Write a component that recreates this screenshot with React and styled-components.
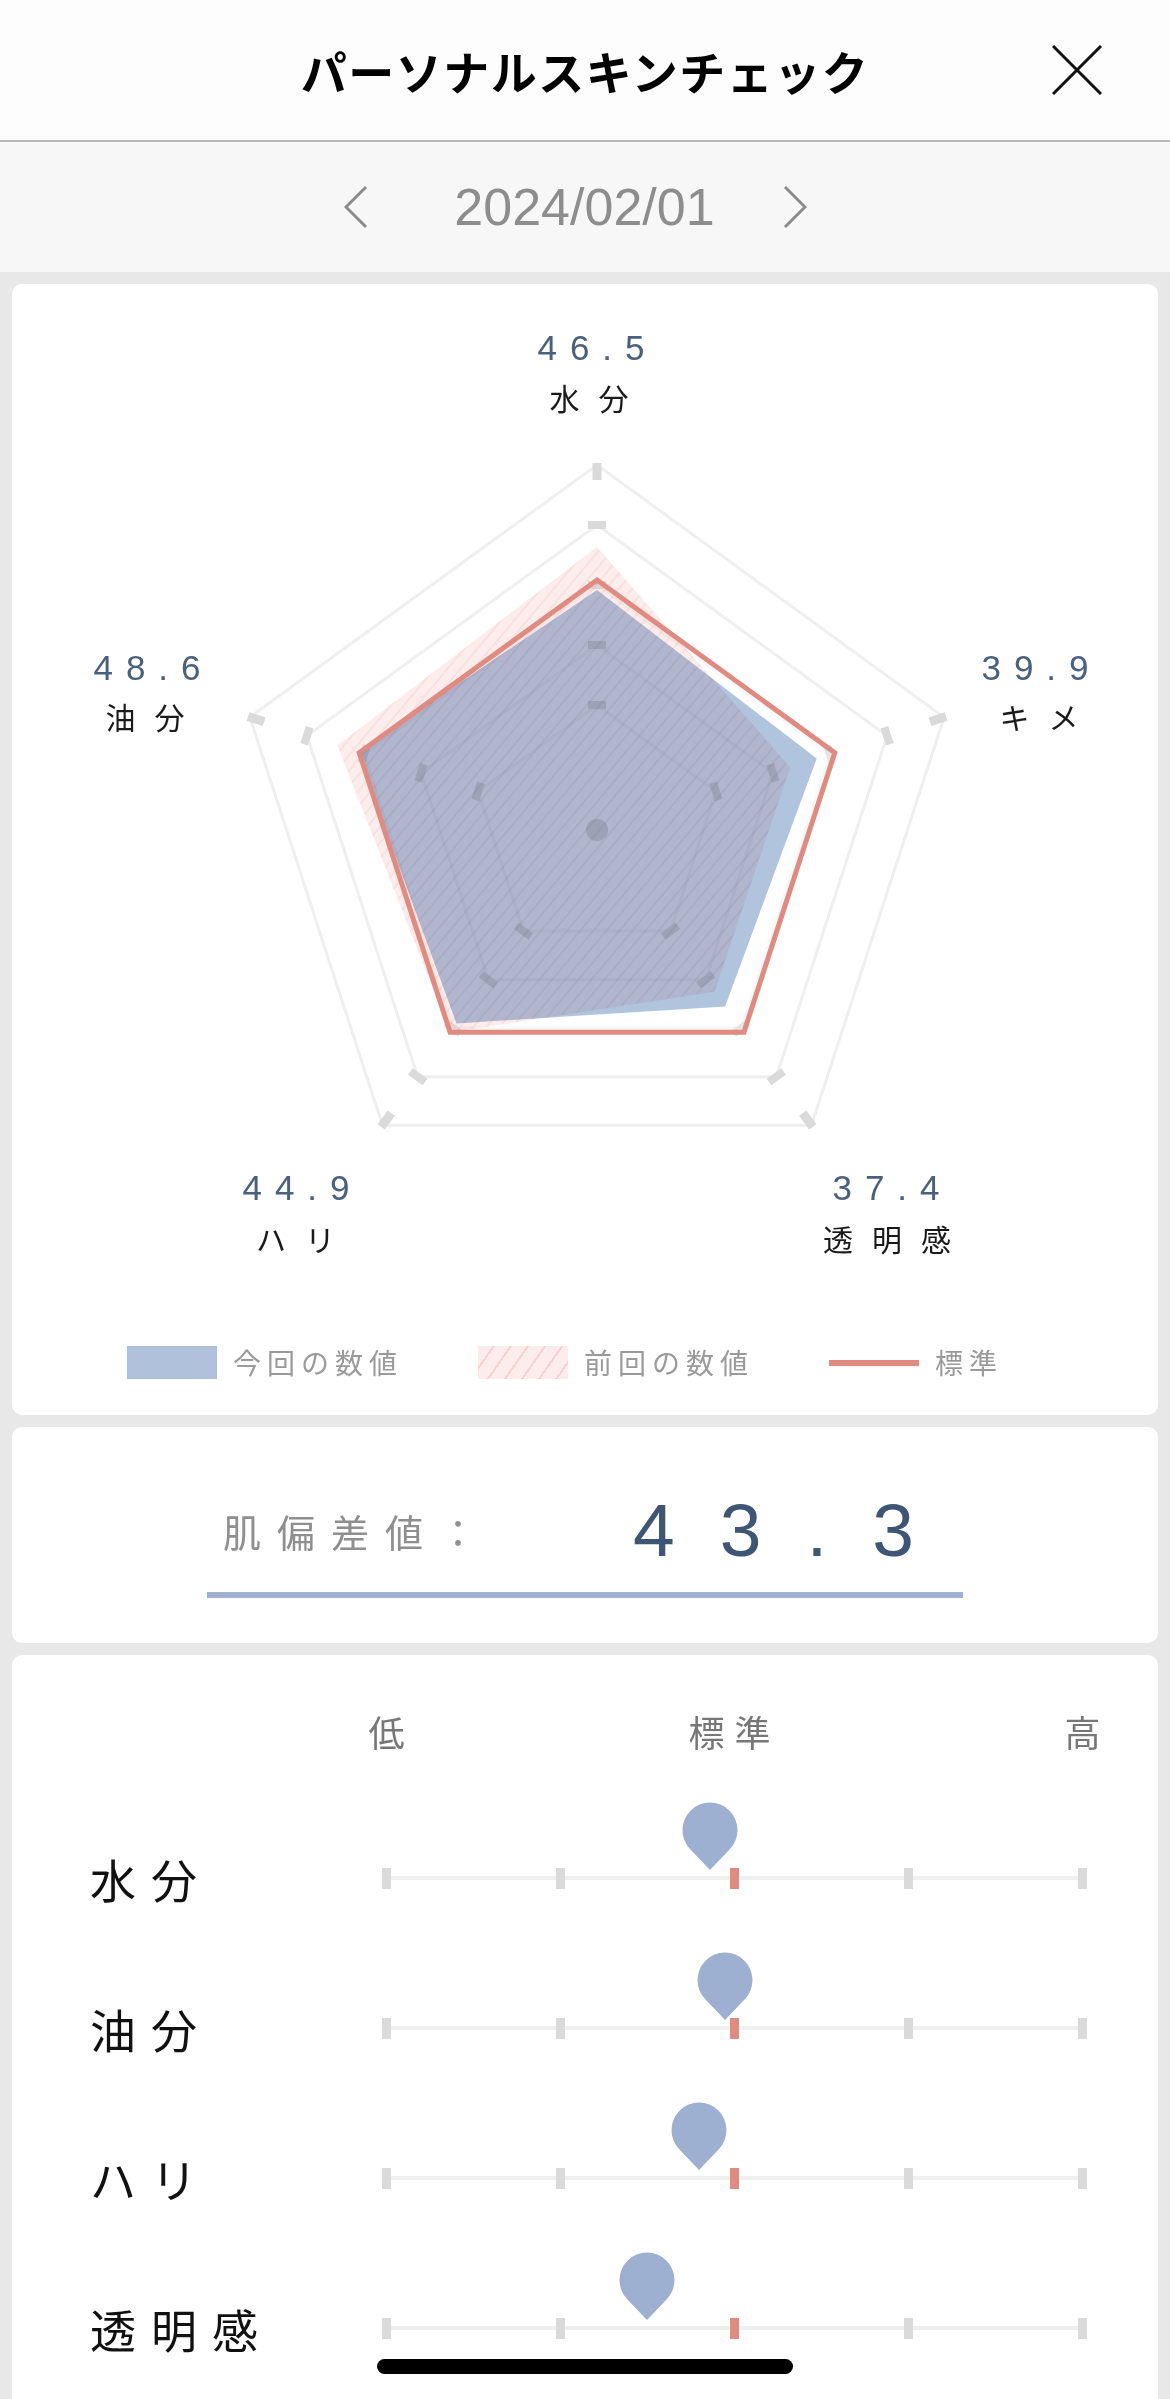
import React from 'react';
import styled, { createGlobalStyle } from 'styled-components';

const GlobalStyle = createGlobalStyle`
  html, body { margin: 0; padding: 0; background: #e8e8e8; }
  body { font-family: "Noto Sans CJK JP", "Noto Sans", sans-serif; }
  * { box-sizing: border-box; }
`;

const Page = styled.div`
  position: relative;
  width: 1170px;
  height: 2399px;
  overflow: hidden;
  background: #e8e8e8;
`;

const Header = styled.header`
  height: 142px;
  background: #fdfdfd;
  border-bottom: 2px solid #b8b8b8;
  display: grid;
  grid-template-columns: 1fr auto 1fr;
  align-items: center;
`;

const Title = styled.h1`
  grid-column: 2;
  margin: 0;
  font-family: "Noto Sans CJK JP", sans-serif;
  font-size: 46px;
  font-weight: 700;
  letter-spacing: 1.5px;
  line-height: 1;
  color: #000;
`;

const CloseButton = styled.button`
  justify-self: end;
  margin-right: 66px;
  width: 54px;
  height: 54px;
  padding: 0;
  border: 0;
  background: none;
  display: flex;
  align-items: center;
  justify-content: center;
`;

const DateBar = styled.div`
  height: 130px;
  background: #f7f7f7;
  display: flex;
  align-items: center;
  justify-content: center;
  padding-right: 19px;
`;

const NavButton = styled.button`
  width: 24px;
  height: 44px;
  padding: 0;
  border: 0;
  background: none;
  display: flex;
`;

const DateText = styled.div`
  font-family: "Liberation Sans", Arial, sans-serif;
  font-size: 52px;
  line-height: 1;
  color: #8d8d8d;
  margin: 0 68px 0 86px;
`;

const Cards = styled.main`
  display: flex;
  flex-direction: column;
  gap: 12px;
  padding: 12px 12px 0;
`;

const Card = styled.section`
  background: #fff;
  border-radius: 10px;
`;

const RadarCard = styled(Card)`
  padding-bottom: 36px;
`;

const RadarSvg = styled.svg`
  display: block;
  width: 1146px;
  height: 1062px;
`;

const AxisValue = styled.text`
  font-family: "Liberation Sans", Arial, sans-serif;
  font-size: 35px;
  letter-spacing: 13px;
  fill: #4a607f;
  text-anchor: middle;
`;

const AxisName = styled.text`
  font-family: "Noto Sans CJK JP", sans-serif;
  font-size: 30px;
  letter-spacing: 19px;
  fill: #1a1a1a;
  text-anchor: middle;
`;

const BlendPoly = styled.polygon`
  mix-blend-mode: multiply;
`;

const Legend = styled.div`
  display: flex;
  align-items: center;
  gap: 75px;
  padding-left: 115px;
  height: 33px;
`;

const LegendItem = styled.div`
  display: flex;
  align-items: center;
  gap: 16px;
`;

const Swatch = styled.span`
  display: block;
  width: 90px;
  height: ${p => (p.$kind === 'line' ? '6px' : '33px')};
  background: ${p =>
    p.$kind === 'current'
      ? '#b0c1dc'
      : p.$kind === 'previous'
      ? 'repeating-linear-gradient(125deg, #fcecec 0 12px, #f5d3d3 12px 14px)'
      : '#e08a80'};
`;

const LegendText = styled.span`
  font-size: 28px;
  letter-spacing: 6px;
  line-height: 33px;
  color: #9a9a9a;
`;

const ScoreCard = styled(Card)`
  padding: 66px 0 45px;
`;

const ScoreRow = styled.div`
  width: 756px;
  margin: 0 auto;
  display: flex;
  align-items: center;
  padding: 0 4px 0 16px;
`;

const ScoreLabel = styled.span`
  font-size: 38px;
  letter-spacing: 16px;
  line-height: 1;
  color: #8f8f8f;
`;

const ScoreValue = styled.span`
  margin-left: auto;
  font-family: "Liberation Sans", Arial, sans-serif;
  font-size: 75px;
  letter-spacing: 45px;
  line-height: 75px;
  color: #3e5574;
`;

const Underline = styled.div`
  width: 756px;
  height: 6px;
  margin: 24px auto 0;
  background: #9fb0d0;
`;

const LevelCard = styled(Card)`
  min-height: 760px;
  padding: 58px 70px 0 78px;
`;

const LevelGrid = styled.div`
  display: grid;
  grid-template-columns: 292px 705px;
  align-items: center;
`;

const ScaleMarks = styled.div`
  grid-column: 2;
  display: flex;
  justify-content: space-between;
  padding: 0 4.5px;
  height: 36px;
`;

const ScaleMark = styled.span`
  width: 0;
  display: flex;
  justify-content: center;
  white-space: nowrap;
  font-size: 36px;
  letter-spacing: ${p => (p.$wide ? '10px' : '0')};
  line-height: 36px;
  color: #777;
`;

const LevelList = styled.div`
  margin-top: 54px;
`;

const LevelRow = styled(LevelGrid)`
  height: 150px;
`;

const RowLabel = styled.span`
  font-size: 46px;
  letter-spacing: 15px;
  line-height: 1;
  color: #111;
`;

const Track = styled.div`
  position: relative;
  display: flex;
  align-items: center;
  height: 21px;
`;

const Tick = styled.span`
  flex: 0 0 9px;
  height: 21px;
  background: ${p => (p.$std ? '#e08a80' : '#dadada')};
`;

const Segment = styled.span`
  flex: 1;
  height: 4px;
  background: #efefef;
`;

const Pin = styled.svg.attrs(p => ({
  style: { left: `${4.5 + 6.96 * p.$value - 28}px` },
}))`
  position: absolute;
  bottom: 18px;
  width: 56px;
  height: 70px;
`;

const HomeIndicator = styled.div`
  position: absolute;
  left: 50%;
  bottom: 25px;
  width: 416px;
  height: 15px;
  margin-left: -208px;
  border-radius: 8px;
  background: #000;
`;

const CX = 585;
const CY = 546;
const RINGS = [365, 305, 245, 185, 125];
const ang = i => ((-90 + 72 * i) * Math.PI) / 180;
const pt = (r, i) => [CX + r * Math.cos(ang(i)), CY + r * Math.sin(ang(i))];
const poly = rs => rs.map((r, i) => pt(r, i).map(n => n.toFixed(1)).join(',')).join(' ');

const CURRENT = [240, 231, 218, 239, 252];
const PREVIOUS = [283, 203, 200, 250, 273];
const STANDARD = [250, 250, 250, 250, 250];

const AXES = [
  { value: '46.5', name: '水分', vx: 585.5, vy: 76, nx: 586.5, ny: 126 },
  { value: '39.9', name: 'キメ', vx: 1029.5, vy: 396, nx: 1036.5, ny: 445 },
  { value: '37.4', name: '透明感', vx: 880.5, vy: 916, nx: 884.5, ny: 967 },
  { value: '44.9', name: 'ハリ', vx: 290.5, vy: 916, nx: 293, ny: 967 },
  { value: '48.6', name: '油分', vx: 141.5, vy: 396, nx: 142.5, ny: 445 },
];

function Ticks() {
  const out = [];
  RINGS.forEach((r, k) => {
    for (let i = 0; i < 5; i++) {
      if (k === 0) {
        const [x1, y1] = pt(350, i);
        const [x2, y2] = pt(367, i);
        out.push(<line key={`t${k}${i}`} x1={x1} y1={y1} x2={x2} y2={y2} stroke="#dadada" strokeWidth="9" />);
      } else {
        const a = ang(i);
        const [x, y] = pt(r, i);
        const px = -Math.sin(a) * 9;
        const py = Math.cos(a) * 9;
        out.push(
          <line
            key={`t${k}${i}`}
            x1={x - px}
            y1={y - py}
            x2={x + px}
            y2={y + py}
            stroke={k === 1 ? '#dadada' : '#e4e4e4'}
            strokeWidth="8"
          />
        );
      }
    }
  });
  return out;
}

function Radar() {
  return (
    <RadarSvg viewBox="0 0 1146 1062">
      <defs>
        <pattern id="hatch" width="10" height="10" patternUnits="userSpaceOnUse" patternTransform="rotate(40)">
          <rect width="10" height="10" fill="#fcedec" />
          <line x1="1" y1="0" x2="1" y2="10" stroke="#f5d8d8" strokeWidth="1.2" />
        </pattern>
      </defs>
      {RINGS.map((r, k) => (
        <polygon
          key={r}
          points={poly([r, r, r, r, r])}
          fill="none"
          stroke={k < 2 ? '#efefef' : '#f8f8f8'}
          strokeWidth="3"
        />
      ))}
      <Ticks />
      <circle cx={CX} cy={CY} r="11" fill="#e2e2e2" />
      <BlendPoly points={poly(CURRENT)} fill="#b1c4de" />
      <BlendPoly points={poly(PREVIOUS)} fill="url(#hatch)" />
      <polygon points={poly(STANDARD)} fill="none" stroke="#e08a80" strokeWidth="5" />
      {AXES.map(a => (
        <g key={a.name}>
          <AxisValue x={a.vx} y={a.vy}>{a.value}</AxisValue>
          <AxisName x={a.nx} y={a.ny}>{a.name}</AxisName>
        </g>
      ))}
    </RadarSvg>
  );
}

const LEVELS = [
  { name: '水分', value: 46.5 },
  { name: '油分', value: 48.6 },
  { name: 'ハリ', value: 44.9 },
  { name: '透明感', value: 37.4 },
];

function LevelTrack({ value }) {
  const parts = [];
  for (let i = 0; i < 5; i++) {
    parts.push(<Tick key={`k${i}`} $std={i === 2} />);
    if (i < 4) parts.push(<Segment key={`s${i}`} />);
  }
  return (
    <Track>
      {parts}
      <Pin $value={value} viewBox="0 0 56 70">
        <path d="M28 69 L8 47.9 A27.5 27.5 0 1 1 48 47.9 Z" fill="#9db0d1" />
      </Pin>
    </Track>
  );
}

export default function App() {
  return (
    <Page>
      <GlobalStyle />
      <Header>
        <Title>パーソナルスキンチェック</Title>
        <CloseButton aria-label="閉じる">
          <svg width="50" height="50" viewBox="0 0 50 50">
            <path d="M1 1 L49 49 M49 1 L1 49" stroke="#111" strokeWidth="3" fill="none" />
          </svg>
        </CloseButton>
      </Header>
      <DateBar>
        <NavButton aria-label="前へ">
          <svg width="24" height="44" viewBox="0 0 24 44">
            <polyline points="22,2 2,22 22,42" fill="none" stroke="#8a8a8a" strokeWidth="3" />
          </svg>
        </NavButton>
        <DateText>2024/02/01</DateText>
        <NavButton aria-label="次へ">
          <svg width="24" height="44" viewBox="0 0 24 44">
            <polyline points="2,2 22,22 2,42" fill="none" stroke="#8a8a8a" strokeWidth="3" />
          </svg>
        </NavButton>
      </DateBar>
      <Cards>
        <RadarCard>
          <Radar />
          <Legend>
            <LegendItem>
              <Swatch $kind="current" />
              <LegendText>今回の数値</LegendText>
            </LegendItem>
            <LegendItem>
              <Swatch $kind="previous" />
              <LegendText>前回の数値</LegendText>
            </LegendItem>
            <LegendItem>
              <Swatch $kind="line" />
              <LegendText>標準</LegendText>
            </LegendItem>
          </Legend>
        </RadarCard>
        <ScoreCard>
          <ScoreRow>
            <ScoreLabel>肌偏差値：</ScoreLabel>
            <ScoreValue>43.3</ScoreValue>
          </ScoreRow>
          <Underline />
        </ScoreCard>
        <LevelCard>
          <LevelGrid>
            <ScaleMarks>
              <ScaleMark>低</ScaleMark>
              <ScaleMark $wide>標準</ScaleMark>
              <ScaleMark>高</ScaleMark>
            </ScaleMarks>
          </LevelGrid>
          <LevelList>
            {LEVELS.map(l => (
              <LevelRow key={l.name}>
                <RowLabel>{l.name}</RowLabel>
                <LevelTrack value={l.value} />
              </LevelRow>
            ))}
          </LevelList>
        </LevelCard>
      </Cards>
      <HomeIndicator />
    </Page>
  );
}
